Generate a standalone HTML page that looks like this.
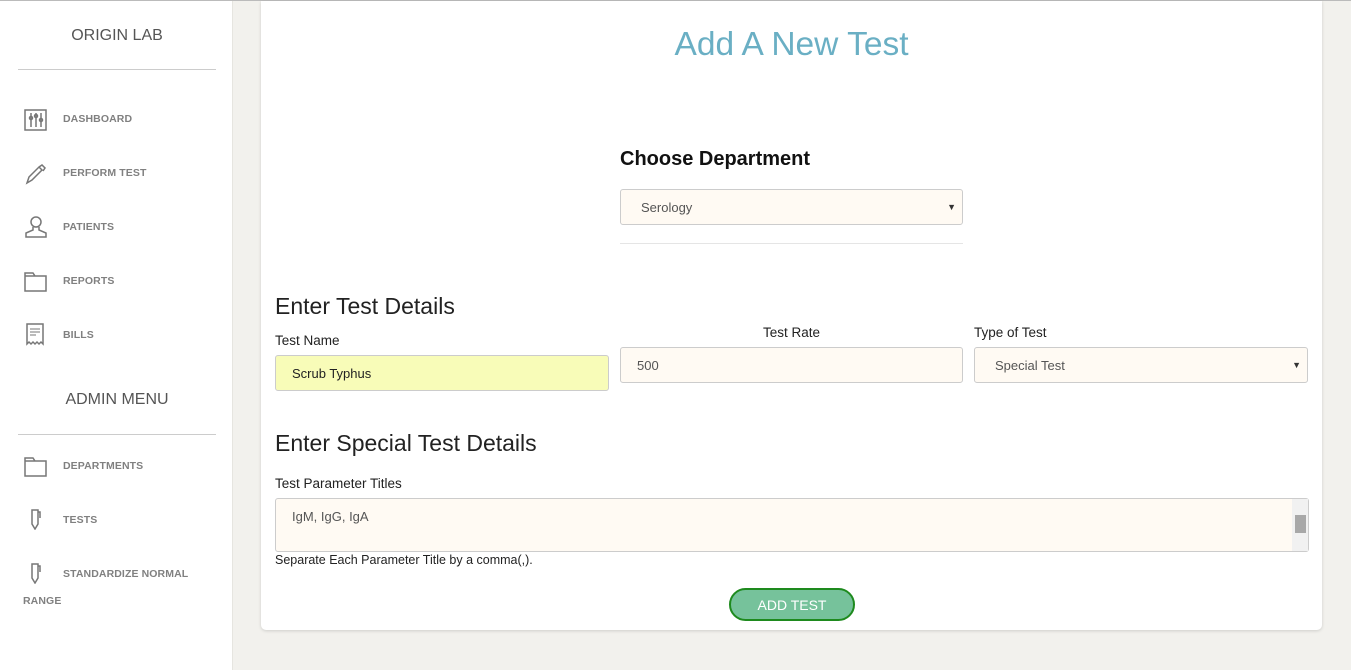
<!DOCTYPE html>
<html><head><style>
*{box-sizing:border-box;margin:0;padding:0}
body{width:1351px;height:669px;background:#f2f1ed;font-family:"Liberation Sans",sans-serif;position:relative;overflow:hidden;border-top:1px solid #bbb}
.side{position:absolute;left:0;top:0;width:233px;height:669px;background:#fff;border-right:1px solid #e6e5e0}
.brand{position:absolute;left:18px;width:198px;text-align:center;color:#555;font-size:16px}
.hr{position:absolute;left:18px;width:198px;border-top:1px solid #ccc}
.item{position:absolute;left:63px;font-size:10.5px;font-weight:bold;color:#808080;letter-spacing:.1px}
.ic{position:absolute;left:24px}
.card{position:absolute;left:261px;top:0;width:1061px;height:629px;background:#fff;border-radius:0 0 5px 5px;box-shadow:0 1px 3px rgba(0,0,0,.15)}
.abs{position:absolute}
.inp{position:absolute;border:1px solid #ccc;border-radius:3px;background:#fffaf3;font-size:13px;color:#555;padding-left:20px;display:flex;align-items:center}
.lbl{position:absolute;font-size:13.5px;color:#222}
.arr{position:absolute;right:6px;font-size:9px;color:#333}
</style></head><body>
<div class="side">
<div class="brand" style="top:26px">ORIGIN LAB</div>
<div class="hr" style="top:68px"></div>
<svg class="ic" style="top:107px" width="24" height="24" viewBox="0 0 24 24" fill="none" stroke="#777" stroke-width="1.5"><rect x="1" y="2" width="21" height="20"/><path d="M7 5v14M12 5v14M17 5v14"/><circle cx="7" cy="10" r="1.5"/><circle cx="12" cy="8" r="1.5"/><circle cx="17" cy="12" r="1.5"/></svg>
<div class="item" style="top:112px">DASHBOARD</div>
<svg class="ic" style="top:162px" width="24" height="22" viewBox="0 0 24 22" fill="none" stroke="#777" stroke-width="1.5"><path d="M3 20l2-6 10-10 3 3-10 10zM3 20l5-3M15 4l3-2 3 3-2 3"/></svg>
<div class="item" style="top:166px">PERFORM TEST</div>
<svg class="ic" style="top:214px" width="24" height="24" viewBox="0 0 24 24" fill="none" stroke="#777" stroke-width="1.5"><circle cx="12" cy="7" r="5"/><path d="M9 12v3l-7 3v4h20v-4l-7-3v-3"/></svg>
<div class="item" style="top:220px">PATIENTS</div>
<svg class="ic" style="top:271px" width="24" height="20" viewBox="0 0 24 20" fill="none" stroke="#777" stroke-width="1.5"><path d="M1 1h8l2 3h11v15H1z M1 4h21"/></svg>
<div class="item" style="top:274px">REPORTS</div>
<svg class="ic" style="top:322px" width="22" height="24" viewBox="0 0 22 24" fill="none" stroke="#777" stroke-width="1.5"><path d="M3 1h16v20l-2-2-2 2-2-2-2 2-2-2-2 2-2-2-2 2z"/><path d="M6 6h10M6 9h10M6 12h6" stroke-width="1"/></svg>
<div class="item" style="top:328px">BILLS</div>
<div class="brand" style="top:390px">ADMIN MENU</div>
<div class="hr" style="top:433px"></div>
<svg class="ic" style="top:456px" width="24" height="20" viewBox="0 0 24 20" fill="none" stroke="#777" stroke-width="1.5"><path d="M1 1h8l2 3h11v15H1z M1 4h21"/></svg>
<div class="item" style="top:459px">DEPARTMENTS</div>
<svg class="ic" style="top:507px;left:30px" width="12" height="22" viewBox="0 0 12 22" fill="none" stroke="#777" stroke-width="1.5"><path d="M2 2h6v14l-3 5-3-5zM8 4h2v6"/></svg>
<div class="item" style="top:513px">TESTS</div>
<svg class="ic" style="top:561px;left:30px" width="12" height="22" viewBox="0 0 12 22" fill="none" stroke="#777" stroke-width="1.5"><path d="M2 2h6v14l-3 5-3-5zM8 4h2v6"/></svg>
<div class="item" style="top:567px">STANDARDIZE NORMAL</div>
<div class="item" style="top:594px;left:23px">RANGE</div>
</div>
<div class="card">
<div class="abs" style="left:0;width:1061px;top:25px;text-align:center;font-size:33.5px;color:#6aafc4">Add A New Test</div>
<div class="abs" style="left:359px;top:147px;font-size:20px;font-weight:bold;color:#111">Choose Department</div>
<div class="inp" style="left:359px;top:188px;width:343px;height:36px">Serology<span class="arr">▼</span></div>
<div class="abs" style="left:359px;top:242px;width:343px;border-top:1px solid #e5e5e5"></div>
<div class="abs" style="left:14px;top:292px;font-size:23px;color:#222">Enter Test Details</div>
<div class="lbl" style="left:14px;top:332px">Test Name</div>
<div class="inp" style="left:14px;top:354px;width:334px;height:36px;background:#f8fcb8;padding-left:16px;color:#222">Scrub Typhus</div>
<div class="lbl" style="left:359px;width:343px;text-align:center;top:324px">Test Rate</div>
<div class="inp" style="left:359px;top:346px;width:343px;height:36px;padding-left:16px">500</div>
<div class="lbl" style="left:713px;top:324px">Type of Test</div>
<div class="inp" style="left:713px;top:346px;width:334px;height:36px">Special Test<span class="arr">▼</span></div>
<div class="abs" style="left:14px;top:429px;font-size:23px;color:#222">Enter Special Test Details</div>
<div class="lbl" style="left:14px;top:475px">Test Parameter Titles</div>
<div class="inp" style="left:14px;top:497px;width:1034px;height:54px;align-items:flex-start;padding-top:10px;padding-left:16px">IgM, IgG, IgA
<div class="abs" style="right:0;top:0;width:16px;height:52px;background:#f1f1f1"><div class="abs" style="left:3px;top:16px;width:11px;height:18px;background:#a8a8a8"></div></div></div>
<div class="abs" style="left:14px;top:552px;font-size:12.5px;color:#222">Separate Each Parameter Title by a comma(,).</div>
<div class="abs" style="left:468px;top:587px;width:126px;height:33px;border:2px solid #1e8a1e;border-radius:17px;background:#76c29b;color:#fff;font-size:14px;display:flex;align-items:center;justify-content:center">ADD TEST</div>
</div>
</body></html>
